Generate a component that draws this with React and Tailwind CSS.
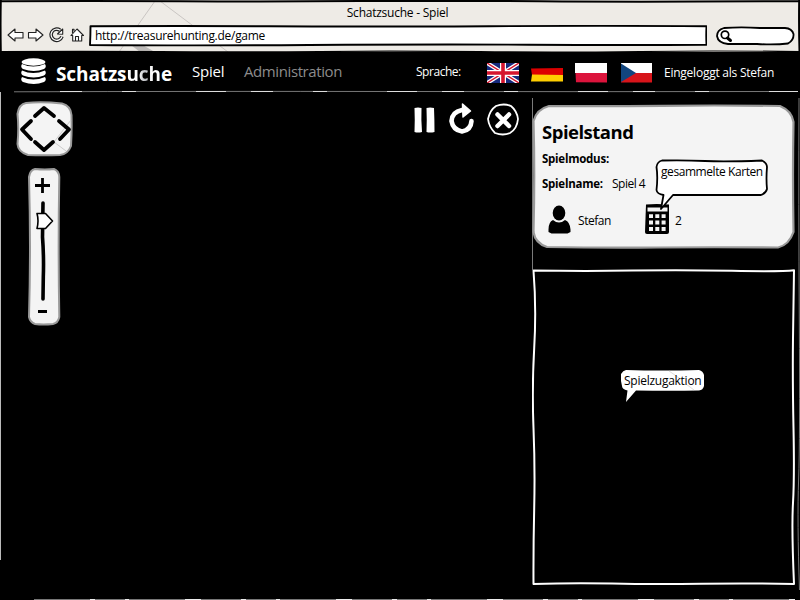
const ink = { fill: 'none', stroke: '#000', strokeLinecap: 'round', strokeLinejoin: 'round' };

function BrowserBar() {
  return (
    <header className="relative h-[52px] bg-[#eeebe6] text-black">
      <svg className="absolute inset-0" width="800" height="52">
        <path d="M155 1L119 52M160 1L228 52" stroke="#c9c5c2" strokeWidth="1" />
        <path d="M127 42l5-3 23 13h-15z" fill="#bdbab8" />
        <path d="M0 1.200Q90 .8 180 1.200T360 1.100 540 1.300 800 1.200M.8 0Q.3 24 .8 52M799.200 0Q798.800 28 799.500 52" {...ink} strokeWidth="2" />
        <path d="M0 51.700Q80 51.200 160 51.700T320 51.500 480 51.700 640 51.500 800 51.700" {...ink} strokeWidth="1.200" />
      </svg>
      <div className="relative flex h-[25px] items-center justify-center pr-[5px]">
        <span className="text-xs leading-[15px] tracking-[-0.24px]">Schatzsuche - Spiel</span>
      </div>
      <div className="relative flex h-[22px] items-start">
        <svg width="89" height="22" className="shrink-0" fill="#fff" stroke="#222" strokeWidth="1.100" strokeLinejoin="round">
          <path d="M8 10l7-6v3.500h8v5.500h-8V16z" />
          <path d="M43 10l-7-6v3.500h-7.500v5.500H36V16z" />
          <path d="M60 5.200A5.600 5.600 0 1 0 62 11.500" fill="none" strokeWidth="3.600" />
          <path d="M60 5.200A5.600 5.600 0 1 0 62 11.500" fill="none" stroke="#fff" strokeWidth="1.200" />
          <path d="M57.500 9l5.200.3V4z" />
          <path d="M71 10.500l6-6.500 6.500 6.500h-1.800V16h-9V10.500z" />
          <path d="M75.500 16v-4.500h3V16M74 6.500V4.300h-1.500V8" fill="none" />
        </svg>
        <div className="relative flex h-[21px] w-[618px] items-center">
          <svg className="absolute inset-0" width="618" height="22">
            <path d="M1.500 1.300Q90 .8 180 1.300T400 1.200 617.500 1.300Q617 11 617.500 19.700Q540 20.200 440 19.700T220 20 1 20Q1.500 10 1.500 1.300z" {...ink} fill="#fff" strokeWidth="1.900" />
          </svg>
          <span className="relative pl-[6px] text-xs leading-[14px] tracking-[-0.28px]">http://treasurehunting.de/game</span>
        </div>
        <svg width="80" height="22" viewBox="0 0 80 22" className="ml-2 shrink-0">
          <path d="M9 3Q26 1.800 45 3H70Q77 3.500 78.500 9Q79 15 73 18.500Q60 20 42 19H13Q3 18 2 11Q2 5 9 3z" {...ink} fill="#fff" strokeWidth="1.800" />
          <circle cx="10" cy="9.800" r="3.700" {...ink} strokeWidth="1.700" />
          <path d="M12.500 13l3 2.500" {...ink} strokeWidth="3" />
        </svg>
      </div>
    </header>
  );
}

function Nav() {
  return (
    <nav className="flex h-[40px] items-center text-white">
      <svg width="27" height="30" className="-mt-[1px] ml-5 shrink-0" fill="#fff">
        <ellipse cx="13.500" cy="5" rx="12" ry="3.700" />
        <path d="M2 7q11 5 23 0q2 3-1 5q-10 4-21 0q-3-2-1-5zM2 13.500q11 5 23 0q2 3-1 5q-10 4-21 0q-3-2-1-5zM2 20q11 5 23 0q2 3-1 5q-10 4-21 0q-3-2-1-5z" />
      </svg>
      <span className="mt-1 ml-[9px] w-[136px] text-[19px] leading-6 font-bold tracking-[-0.1px]">
        Schatzs<span className="bg-gradient-to-r from-white from-35% via-[#b9bbc0] via-55% to-white to-75% bg-clip-text text-transparent">uch</span>e
      </span>
      <span className="-mt-[2px] w-[52px] text-[15px] leading-5 tracking-[-0.2px]">Spiel</span>
      <span className="-mt-[2px] w-[172px] text-[15px] leading-5 tracking-[-0.4px] text-[#8c8c8c]">Administration</span>
      <span className="w-[70px] text-xs leading-4 tracking-[-0.46px]">Sprache:</span>
      <svg width="166" height="22" className="mt-[2px] shrink-0">
        <svg x="1" y="1" width="32" height="20" viewBox="0 0 32 20">
          <path d="M0 0h32v20H0z" fill="#16297c" />
          <path d="M0 0l32 20M32 0L0 20" stroke="#fff" strokeWidth="4" />
          <path d="M0 0l32 20M32 0L0 20" stroke="#d5152e" strokeWidth="1.400" />
          <path d="M16 0v20M0 10h32" stroke="#fff" strokeWidth="6" />
          <path d="M16 0v20M0 10h32" stroke="#d5152e" strokeWidth="3.600" />
        </svg>
        <path d="M45 6.500L77 6v7H46z" fill="#d00" />
        <path d="M46 12.500L77 13v6.500H45z" fill="#ffce00" />
        <path d="M89 1h32v10H89z" fill="#fff" />
        <path d="M89.500 11H121v9.500l-31-.3z" fill="#dc143c" />
        <path d="M135 1h31v10h-31z" fill="#fff" />
        <path d="M135 11h31v9.500h-31z" fill="#d7141a" />
        <path d="M135 1.500L150 11l-15 9z" fill="#11457e" />
      </svg>
      <span className="mt-[2px] ml-[12px] text-xs leading-4 tracking-[-0.24px] whitespace-nowrap">Eingeloggt als Stefan</span>
    </nav>
  );
}

function PanPad() {
  return (
    <svg width="58" height="57" viewBox="0 0 58 57" className="ml-[15px]">
      <path d="M11 3Q27 1.500 47 3.500Q56 6 56.500 15Q57 30 56 46Q53 54 45 55Q28 55.500 13 55Q3 52 2.500 44Q4 28 2.500 14Q4 4 11 3z" fill="#f4f4f4" stroke="#999" strokeWidth="2" />
      <path d="M56 20L39 42l12 9" stroke="#ccc" fill="none" />
      <path d="M20 16l9-8 10 8M20 42l9 8 9-8M16 21l-9 8.500 9 9.500M44 21l10 8.500-9 9.500" {...ink} strokeWidth="3.800" />
    </svg>
  );
}

function ZoomBar() {
  return (
    <div className="relative mt-[10px] ml-[27px] flex h-[160px] w-[34px] flex-col items-center">
      <svg className="absolute inset-0" width="34" height="160">
        <path d="M8 2Q18 3 27 2Q32 4 32.300 10Q31 80 32.300 150Q31 156 26 157Q16 158 8 157Q3 155 2 150Q4 80 2 10Q3 3 8 2z" fill="#f4f4f4" stroke="#999" strokeWidth="2" />
      </svg>
      <svg className="relative" width="34" height="160">
        <path d="M8 18.500h15M15.500 11v15M11 144.500h9" stroke="#000" strokeWidth="2.800" />
        <path d="M16 36L15.500 70Q17 90 16.300 110L16 132" {...ink} strokeWidth="3.600" />
        <path d="M10 46.500h8.500l7 7.500-7 7.500H10q2-8 0-15z" {...ink} fill="#fff" strokeWidth="1.600" />
      </svg>
    </div>
  );
}

function Controls() {
  return (
    <svg width="110" height="36" viewBox="0 0 110 36">
      <path d="M4.500 6Q8 5 11.500 6Q11 18 12 30Q8 31 4.500 30Q5 18 4.500 6zM16.500 6Q20 5 24 6Q24.500 18 24.500 30Q20 31 16.500 30Q17 18 16.500 6z" fill="#fff" />
      <path d="M52 8Q42 10 41.500 19Q43 28 52 29.500Q61 28 61.500 19" {...ink} stroke="#fff" strokeWidth="4.600" />
      <path d="M52.500 2l8 7-7.500 6z" fill="#fff" stroke="#fff" strokeWidth="1.500" strokeLinejoin="round" />
      <path d="M86 4Q94 1 101 4Q107 9 108 17Q107 27 100 31Q93 34 85 31Q79 25 78 17Q80 8 86 4z" {...ink} stroke="#fff" strokeWidth="1.800" />
      <path d="M87.500 12.500l11.500 11.500M99 12.500L87.500 24" {...ink} stroke="#fff" strokeWidth="4.500" />
    </svg>
  );
}

function GameMap() {
  return (
    <section className="flex w-[532px] items-start justify-between pr-[12px]">
      <div className="flex flex-col pt-[8px]">
        <PanPad />
        <ZoomBar />
      </div>
      <div className="pt-[10px]">
        <Controls />
      </div>
    </section>
  );
}

function ScoreCard() {
  return (
    <div className="relative h-[145px] w-[263px] text-black">
      <svg className="absolute inset-0" width="263" height="145">
        <path d="M17 2Q70 2.500 130 1.800T248 2Q260 7 261.500 18Q260.500 70 261.500 128Q257 141 246 143.500Q180 143 125 143.500T15 143Q3 139 1.500 128Q3 70 1.500 17Q5 5 17 2z" fill="#f4f4f4" stroke="#999" strokeWidth="2.200" />
      </svg>
      <div className="relative flex flex-col pt-[16px] pl-[10px]">
        <h2 className="h-[24px] text-[18.500px] leading-[24px] font-bold tracking-[-0.5px]">Spielstand</h2>
        <span className="mt-[7px] h-4 text-[11.500px] leading-4 font-bold tracking-[-0.25px]">Spielmodus:</span>
        <div className="mt-[9px] flex h-4 text-[11.500px] leading-4">
          <span className="w-[70px] font-bold tracking-[-0.25px]">Spielname:</span>
          <span className="text-xs leading-4 tracking-[-0.5px]">Spiel 4</span>
        </div>
        <div className="mt-[10px] flex h-[36px] items-center text-xs leading-4 tracking-[-0.45px]">
          <svg width="36" height="34" className="shrink-0">
            <ellipse cx="17" cy="10" rx="6.300" ry="7.500" />
            <path d="M11 17q6 5 12 0q5 2 5.500 9.500v2.500l-3 1.500h-16l-3-1.500V26.500q0-7.500 4.500-9.500z" />
          </svg>
          <span className="w-[66px] pt-[1px]">Stefan</span>
          <svg width="26" height="34" className="shrink-0">
            <path d="M2 1.500Q12 .5 25 1.500V29Q25 31 23 31H3Q1 31 1 29z" />
            <path d="M3.500 4.500h20v4h-20z" fill="#f4f4f4" />
            <path d="M5 11.300h4v3.700h-4zM11.300 11.300h4v3.700h-4zM17.600 11.300h4v3.700h-4zM5 17.500h4v4h-4zM11.300 17.500h4v4h-4zM17.600 17.500h4v4h-4zM5 24h4v4h-4zM11.300 24h4v4h-4zM17.600 24h4v4h-4z" fill="#f4f4f4" />
          </svg>
          <span className="ml-[5px] pt-[1px]">2</span>
        </div>
      </div>
      <div className="absolute top-[55px] left-[123px] h-[54px] w-[115px]">
        <svg className="absolute inset-0" width="115" height="54">
          <path d="M7 1.500Q30 1 50 2T107 1.500Q112 4 112 8Q111 20 112 30Q111 34 106 36H18L6 50L8.500 36Q2 35 1.500 31Q3 18 1.500 8Q2 3 7 1.500z" {...ink} fill="#fff" strokeWidth="1.800" />
        </svg>
        <span className="absolute top-[5px] left-[6px] text-xs leading-4 tracking-[-0.43px] whitespace-nowrap">gesammelte Karten</span>
      </div>
    </div>
  );
}

function ActionPanel() {
  return (
    <div className="relative mt-[19px] h-[319px] w-[263px] pt-[101px] pl-[88px]">
      <svg className="absolute inset-0" width="263" height="319">
        <path d="M1.500 2.500Q50 3.300 100 2.600T200 2.800 262 2.200Q261.500 30 261 70T261.500 160 261 235 262 316Q220 315 170 315.700T80 315.500 1.500 316Q1.300 280 2.200 240T1.500 160 2.200 80 1.500 2.500z" {...ink} stroke="#fff" strokeWidth="2" />
      </svg>
      <div className="relative h-[33px] w-[85px] pt-[4px] pl-[4px] text-xs leading-4 tracking-[-0.26px] text-black">
        <svg className="absolute inset-0" width="85" height="34">
          <path d="M6 1Q42 2 79 1Q83 2 84 6V17Q83 21 79 21.500Q50 22 16 21.500L6 33L7.500 21.500Q2 20 2 17L1 12V5Q3 1.500 6 1z" fill="#fff" />
          <path d="M49 2L62 11M66 15l8 6" stroke="#ddd" />
        </svg>
        <span className="relative">Spielzugaktion</span>
      </div>
    </div>
  );
}

function WindowFrame() {
  return (
    <svg className="pointer-events-none absolute inset-0" width="800" height="600" fill="none">
      <path d="M14 91.800Q200 91.200 400 91.500T798 91.500" stroke="#777" strokeWidth="1" />
      <path d="M60 91.500H798" stroke="#ddd" strokeWidth="1" strokeDasharray="22 40 14 60 30 25" />
      <path d="M0.500 92V560" stroke="#bbb" strokeWidth="1" />
      <path d="M532.500 98V270" stroke="#999" strokeWidth=".8" />
      <path d="M799 98Q798.500 200 799.300 320T798.600 480 799.500 590" stroke="#777" strokeWidth="1" />
      <path d="M34 599.500H795" stroke="#777" strokeWidth="1" />
      <path d="M90 599.500H795" stroke="#eee" strokeWidth="1" strokeDasharray="5 30 4 56 16 40" />
    </svg>
  );
}

export default function App() {
  return (
    <div className="relative h-[600px] w-[800px] overflow-hidden bg-black font-['Open_Sans','Noto_Sans',sans-serif]">
      <BrowserBar />
      <Nav />
      <main className="flex h-[508px]">
        <GameMap />
        <aside className="flex flex-col pt-[12px]">
          <ScoreCard />
          <ActionPanel />
        </aside>
      </main>
      <WindowFrame />
    </div>
  );
}
